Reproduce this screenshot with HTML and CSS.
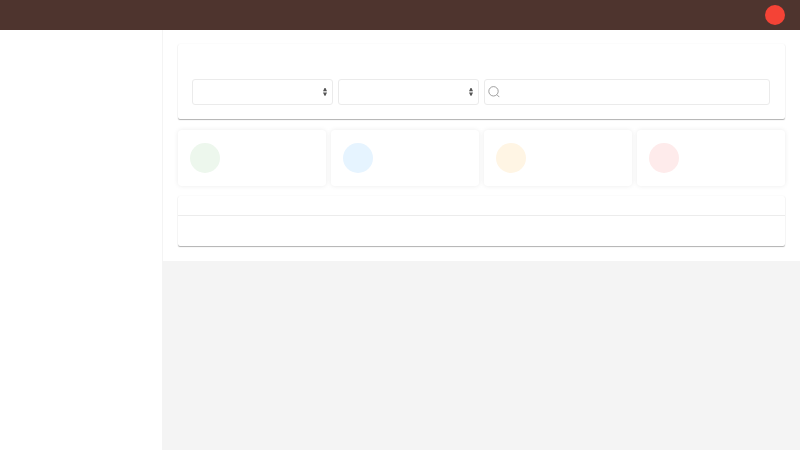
FILE: index.html
```html
<!DOCTYPE html>
<html lang="en">
<head>
<meta charset="utf-8">
<title>Dashboard</title>
<link rel="stylesheet" href="styles.css">
</head>
<body>
<header class="topbar"><div class="avatar"></div></header>
<div class="layout">
  <aside class="sidebar"></aside>
  <main class="content">
    <section class="card filters">
      <div class="select"><svg class="caret" viewBox="0 0 4 8"><path d="M0 3.3 1.5 0h1L4 3.3ZM0 4.4h4L2.5 7.7h-1Z"/></svg></div>
      <div class="select"><svg class="caret" viewBox="0 0 4 8"><path d="M0 3.3 1.5 0h1L4 3.3ZM0 4.4h4L2.5 7.7h-1Z"/></svg></div>
      <div class="search"><svg class="lens" viewBox="0 0 12 12"><circle cx="5.5" cy="5.3" r="4.7"/><path d="m8.9 8.7 2.4 2.4"/></svg></div>
    </section>
    <section class="stats">
      <div class="stat"><div class="dot green"></div></div>
      <div class="stat"><div class="dot blue"></div></div>
      <div class="stat"><div class="dot amber"></div></div>
      <div class="stat"><div class="dot red"></div></div>
    </section>
    <section class="card table"><div class="table-head"></div></section>
  </main>
</div>
</body>
</html>
```

FILE: styles.css
```css
* { box-sizing: border-box; }
body { margin: 0; height: 100vh; display: flex; flex-direction: column; background: #f4f4f4; overflow: hidden; font-family: "Open Sans", sans-serif; }
.topbar { height: 30px; flex: none; background: #4e342e; display: flex; align-items: center; justify-content: flex-end; padding-right: 15px; }
.avatar { width: 20px; height: 20px; border-radius: 50%; background: #f44336; }
.layout { flex: 1; display: flex; align-items: flex-start; }
.sidebar { width: 163px; flex: none; align-self: stretch; background: #fff; border-right: 1px solid #f4f4f4; }
.content { flex: 1; height: 231px; background: #fff; padding: 14px 15px 0; }
.card { background: #fff; border-radius: 2px; box-shadow: 0 1px 1px rgba(0,0,0,.3), 0 0 2px rgba(0,0,0,.05); }
.filters { height: 75px; padding: 35px 15px 0 14px; display: grid; grid-template-columns: 141px 141px 1fr; gap: 5px; }
.select, .search { height: 26px; border: 1px solid #ebebeb; border-radius: 3px; display: flex; align-items: center; }
.select { justify-content: flex-end; padding-right: 5px; }
.caret { width: 4px; height: 8px; fill: #555; }
.search { padding-left: 3px; }
.lens { width: 12px; height: 12px; fill: none; stroke: #888; stroke-width: .8; }
.stats { display: grid; grid-template-columns: repeat(4, 1fr); gap: 5px; margin: 11px 0 10px; }
.stat { height: 56px; padding: 12.5px 12px; border-radius: 4px; box-shadow: 0 0 5px rgba(0,0,0,.08); }
.dot { width: 30px; height: 30px; border-radius: 50%; }
.green { background: #edf7ed; }
.blue { background: #e6f4ff; }
.amber { background: #fff5e4; }
.red { background: #feebeb; }
.table { height: 50px; }
.table-head { height: 20px; border-bottom: 1px solid #ececec; }
```
